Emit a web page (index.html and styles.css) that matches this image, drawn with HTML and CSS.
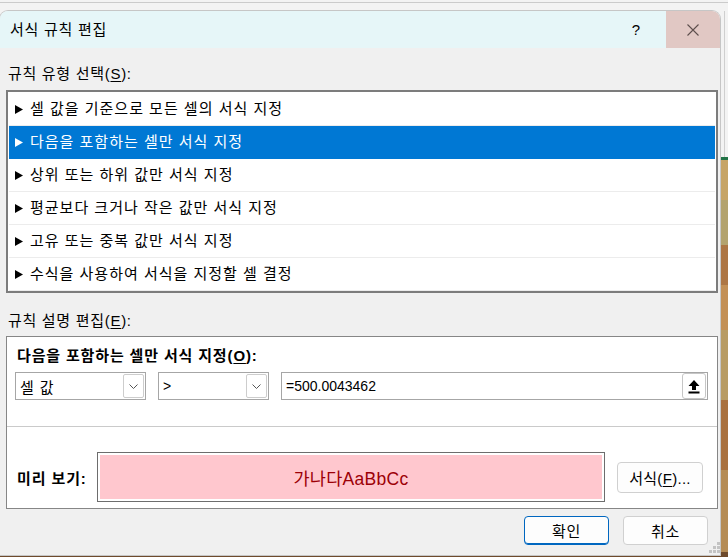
FILE: index.html
```html
<!DOCTYPE html>
<html lang="ko">
<head>
<meta charset="utf-8">
<title>서식 규칙 편집</title>
<link rel="stylesheet" href="styles.css">
</head>
<body>
<div class="dialog">
  <div class="titlebar">
    <div class="title">서식 규칙 편집</div>
    <div class="help">?</div>
    <div class="close">
      <svg width="12" height="12" viewBox="0 0 12 12"><path d="M0.5 0.5 L11.5 11.5 M11.5 0.5 L0.5 11.5" stroke="#5e4f4d" stroke-width="1.1" fill="none"/></svg>
    </div>
  </div>
  <div class="content">
    <div class="label">규칙 유형 선택(<u>S</u>):</div>
    <div class="listbox">
      <div class="row"><svg class="tri" width="8" height="9" viewBox="0 0 8 9"><polygon points="0,0 8,4.5 0,9"/></svg>셀 값을 기준으로 모든 셀의 서식 지정</div>
      <div class="row sel"><svg class="tri" width="8" height="9" viewBox="0 0 8 9"><polygon points="0,0 8,4.5 0,9"/></svg>다음을 포함하는 셀만 서식 지정</div>
      <div class="row"><svg class="tri" width="8" height="9" viewBox="0 0 8 9"><polygon points="0,0 8,4.5 0,9"/></svg>상위 또는 하위 값만 서식 지정</div>
      <div class="row"><svg class="tri" width="8" height="9" viewBox="0 0 8 9"><polygon points="0,0 8,4.5 0,9"/></svg>평균보다 크거나 작은 값만 서식 지정</div>
      <div class="row"><svg class="tri" width="8" height="9" viewBox="0 0 8 9"><polygon points="0,0 8,4.5 0,9"/></svg>고유 또는 중복 값만 서식 지정</div>
      <div class="row"><svg class="tri" width="8" height="9" viewBox="0 0 8 9"><polygon points="0,0 8,4.5 0,9"/></svg>수식을 사용하여 서식을 지정할 셀 결정</div>
    </div>
    <div class="label label2">규칙 설명 편집(<u>E</u>):</div>
    <div class="panel">
      <div class="heading">다음을 포함하는 셀만 서식 지정(<u>O</u>):</div>
      <div class="controls">
        <div class="combo c1"><span>셀 값</span><span class="dd"><svg width="9" height="5" viewBox="0 0 9 5"><polyline points="0.5,0.5 4.5,4.5 8.5,0.5" stroke="#555" stroke-width="1" fill="none"/></svg></span></div>
        <div class="combo c2"><span>&gt;</span><span class="dd"><svg width="9" height="5" viewBox="0 0 9 5"><polyline points="0.5,0.5 4.5,4.5 8.5,0.5" stroke="#555" stroke-width="1" fill="none"/></svg></span></div>
        <div class="combo inp"><span class="num">=500.0043462</span><span class="refbtn"><svg width="12" height="15" viewBox="0 0 12 15"><polygon points="6,1 11.5,7 8,7 8,11 4,11 4,7 0.5,7" fill="#000"/><rect x="0.5" y="12.5" width="11" height="2" fill="#000"/></svg></span></div>
      </div>
      <div class="sep"></div>
      <div class="preview-row">
        <div class="plabel">미리 보기:</div>
        <div class="preview"><div class="pfill">가나다AaBbCc</div></div>
        <button class="btn fmt">서식(<u>F</u>)...</button>
      </div>
    </div>
    <div class="actions">
      <button class="btn ok">확인</button>
      <button class="btn">취소</button>
    </div>
  </div>
  <svg class="grip" width="11" height="11" viewBox="0 0 11 11">
    <rect x="8" y="0" width="3" height="3" fill="#c3c3c3"/>
    <rect x="4" y="4" width="3" height="3" fill="#c3c3c3"/>
    <rect x="8" y="4" width="3" height="3" fill="#c3c3c3"/>
    <rect x="0" y="8" width="3" height="3" fill="#c3c3c3"/>
    <rect x="4" y="8" width="3" height="3" fill="#c3c3c3"/>
    <rect x="8" y="8" width="3" height="3" fill="#c3c3c3"/>
  </svg>
</div>
</body>
</html>
```
FILE: styles.css
```css
html, body {
  margin: 0;
  width: 728px;
  height: 557px;
  overflow: hidden;
}
body {
  font-family: "Liberation Sans", "Noto Sans CJK KR", sans-serif;
  font-size: 15px;
  letter-spacing: 0.9px;
  color: #000;
  background:
    linear-gradient(#cbcbcb, #cbcbcb) 0 2px / 100% 1px no-repeat,
    linear-gradient(#cfcfcf, #cfcfcf) 724px 11px / 1px 146px no-repeat,
    linear-gradient(to bottom,
      #f3f3f3 0 157px,
      #217346 157px 160px,
      #c6a466 160px 200px,
      #b3a36e 200px 245px,
      #ad7644 245px 285px,
      #c39056 285px 330px,
      #b89c64 330px 400px,
      #a9713f 400px 470px,
      #b58c55 470px 552px,
      #6e4a2c 552px 557px);
}
.dialog {
  margin-top: 11px;
  width: 720px;
  height: 544px;
  background: #f0f0f0;
  border-radius: 8px 8px 0 0;
  position: relative;
  display: flex;
  flex-direction: column;
  box-shadow: 0 0 0 1px #c6c6c6;
  overflow: hidden;
}
.titlebar {
  flex: none;
  height: 37px;
  background: #e6f6f8;
  display: flex;
  align-items: center;
}
.title {
  flex: 1;
  padding-left: 10px;
  font-size: 15px;
  letter-spacing: 0.75px;
  line-height: 20px;
}
.help {
  width: 30px;
  margin-right: 15px;
  text-align: center;
  font-size: 15px;
  letter-spacing: 0;
}
.close {
  width: 54px;
  align-self: stretch;
  background: #e1c8c4;
  display: flex;
  align-items: center;
  justify-content: center;
}
.content {
  flex: 1;
  display: flex;
  flex-direction: column;
  padding: 0 2px 0 6px;
}
.label {
  margin-top: 17px;
  height: 18px;
  line-height: 18px;
  padding-left: 2px;
  letter-spacing: 0.7px;
}
.label2 {
  margin-top: 19px;
}
u {
  text-decoration: underline;
  text-underline-offset: 2px;
}
.listbox {
  margin-top: 7px;
  border: 2px solid #7c7c7c;
  background: #fff;
  padding: 1px 1px 0 1px;
}
.row {
  height: 32px;
  border-bottom: 1px solid #ececec;
  display: flex;
  align-items: center;
  gap: 7px;
  padding-left: 6px;
  line-height: 18px;
  letter-spacing: 1px;
}
.tri {
  fill: #000;
  flex: none;
}
.row.sel {
  background: #0078d4;
  color: #fff;
  border-bottom-color: #0078d4;
}
.row.sel .tri {
  fill: #fff;
}
.panel {
  margin-top: 6px;
  border: 1px solid #868686;
  background: #fff;
}
.heading {
  font-weight: bold;
  letter-spacing: 0.85px;
  padding: 10px 0 0 10px;
  line-height: 18px;
}
.controls {
  display: flex;
  gap: 12px;
  margin-top: 7px;
  padding-left: 8px;
}
.combo {
  box-sizing: border-box;
  height: 28px;
  border: 1px solid #a6a6a6;
  display: flex;
  align-items: center;
  justify-content: space-between;
  padding: 1px 1px 1px 4px;
}
.c1 { width: 131px; }
.c2 { width: 111px; }
.c2 span:first-child { font-size: 14px; }
.inp { width: 427px; }
.num {
  font-size: 14px;
  letter-spacing: 0;
}
.dd {
  box-sizing: border-box;
  width: 21px;
  height: 24px;
  border: 1px solid #cdcdcd;
  border-radius: 2px;
  display: flex;
  align-items: center;
  justify-content: center;
}
.refbtn {
  box-sizing: border-box;
  width: 24px;
  height: 26px;
  margin-top: -1px;
  margin-bottom: -1px;
  border: 1px solid #c6c6c6;
  border-radius: 3px;
  background: #fff;
  display: flex;
  align-items: center;
  justify-content: center;
}
.sep {
  margin-top: 26px;
  border-top: 1px solid #cacaca;
}
.preview-row {
  display: flex;
  align-items: center;
  padding: 25px 0 6px 10px;
}
.plabel {
  width: 80px;
  font-weight: bold;
  letter-spacing: 0.9px;
}
.preview {
  box-sizing: border-box;
  width: 508px;
  height: 50px;
  border: 1px solid #6d6d6d;
  padding: 2px;
  background: #fff;
}
.pfill {
  height: 100%;
  background: #ffc7ce;
  color: #9c0006;
  font-size: 17.5px;
  letter-spacing: 0.3px;
  display: flex;
  align-items: center;
  justify-content: center;
}
.btn {
  font: inherit;
  letter-spacing: 0.6px;
  color: #000;
  background: #fdfdfd;
  border: 1px solid #d0d0d0;
  border-radius: 4px;
  padding: 0;
  width: 85px;
  height: 29px;
}
.fmt {
  margin-left: 12px;
  width: 86px;
  height: 31px;
  letter-spacing: 0.3px;
}
.actions {
  display: flex;
  justify-content: flex-end;
  gap: 14px;
  margin-top: 7px;
  padding-right: 10px;
}
.ok {
  border: 1px solid #0067c0;
  box-shadow: inset 0 -1px 0 #0067c0;
}
.grip {
  position: absolute;
  right: 0;
  bottom: 2px;
}
```
